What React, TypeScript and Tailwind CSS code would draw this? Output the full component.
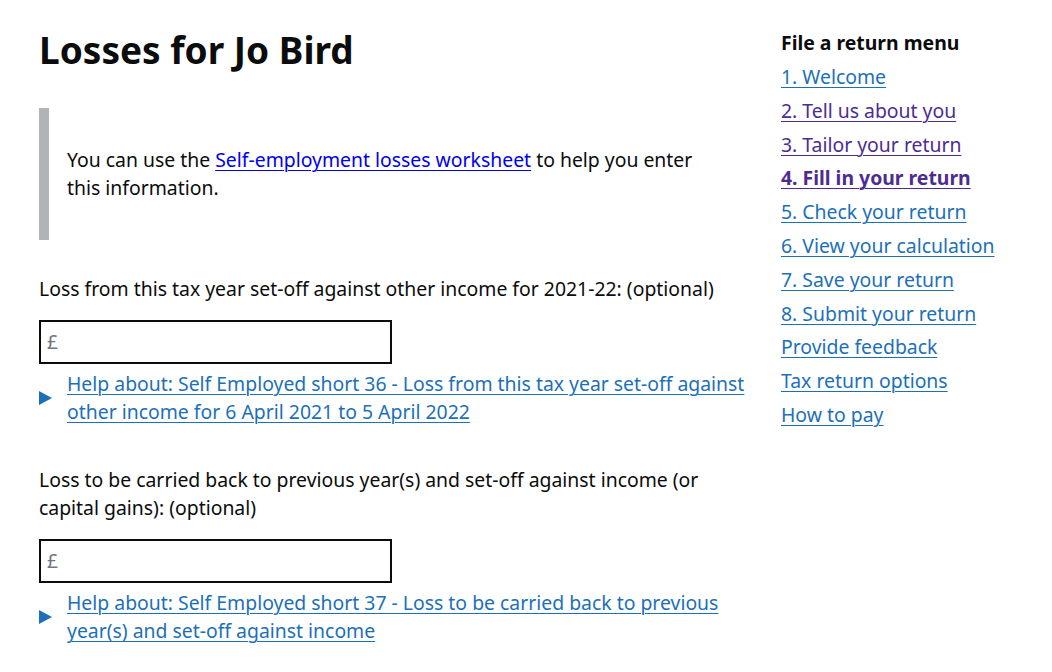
const menu = [
  { name: "1. Welcome", visited: false },
  { name: "2. Tell us about you", visited: true },
  { name: "3. Tailor your return", visited: true },
  { name: "4. Fill in your return", visited: true, current: true },
  { name: "5. Check your return", visited: false },
  { name: "6. View your calculation", visited: false },
  { name: "7. Save your return", visited: false },
  { name: "8. Submit your return", visited: false },
  { name: "Provide feedback", visited: false },
  { name: "Tax return options", visited: false },
  { name: "How to pay", visited: false },
];

const linkCls =
  "underline decoration-1 underline-offset-[3px] text-[#1d70b8]";

function Field({ label, help }: { label: string; help: string }) {
  return (
    <div className="mb-[40px]">
      <label className="block mb-[17px]">{label}</label>
      <div className="w-[353px] h-[44px] border-2 border-[#0b0c0c] flex items-center px-[6px] text-[#6f777b]">
        £
      </div>
      <div className="flex items-center mt-[6px]">
        <span className="w-[28px] shrink-0 text-[#1d70b8]">
          <svg width="13" height="14" viewBox="0 0 13 14">
            <path d="M0 0 L13 7 L0 14 Z" fill="#1d70b8" />
          </svg>
        </span>
        <a href="#" className={linkCls}>
          {help}
        </a>
      </div>
    </div>
  );
}

export default function App() {
  return (
    <div
      className="min-h-screen bg-white text-[#0b0c0c] text-[19.4px] leading-[28px]"
      style={{ fontFamily: '"Noto Sans", Arial, sans-serif' }}
    >
      <div className="flex pl-[39px] pt-[26px]">
        {/* main column */}
        <div className="w-[712px] shrink-0">
          <h1 className="text-[37px] leading-[48px] font-bold mb-[34px]">Losses for Jo Bird</h1>

          <div className="border-l-[10px] border-[#b1b4b6] pl-[18px] py-[38px] mb-[35px]">
            <p className="w-[640px]">
              You can use the{" "}
              <a href="#" className="underline decoration-1 underline-offset-[3px] text-[#0000ee]">
                Self-employment losses worksheet
              </a>{" "}
              to help you enter this information.
            </p>
          </div>

          <Field
            label="Loss from this tax year set-off against other income for 2021-22: (optional)"
            help="Help about: Self Employed short 36 - Loss from this tax year set-off against other income for 6 April 2021 to 5 April 2022"
          />
          <Field
            label="Loss to be carried back to previous year(s) and set-off against income (or capital gains): (optional)"
            help="Help about: Self Employed short 37 - Loss to be carried back to previous year(s) and set-off against income"
          />
        </div>

        {/* side menu */}
        <nav className="ml-[30px] pt-[2px]">
          <h2 className="font-bold leading-[30px] mb-[2px]">File a return menu</h2>
          <ul className="flex flex-col">
            {menu.map((item) => (
              <li key={item.name} className="leading-[33.8px]">
                <a
                  href="#"
                  className={`underline decoration-1 underline-offset-[3px] ${
                    item.visited ? "text-[#4c2c92]" : "text-[#1d70b8]"
                  } ${item.current ? "font-bold" : ""}`}
                >
                  {item.name}
                </a>
              </li>
            ))}
          </ul>
        </nav>
      </div>
    </div>
  );
}
